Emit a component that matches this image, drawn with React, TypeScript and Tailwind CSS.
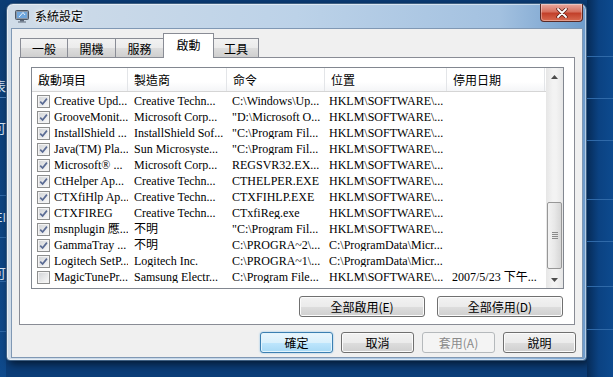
import React from 'react';

const cjk = "font-['Noto_Sans_CJK_TC','Noto_Sans',sans-serif]";
const ming = "font-['Liberation_Serif','Noto_Sans_CJK_TC',serif]";

interface StartupRow {
  on: boolean;
  name: string;
  maker: string;
  cmd: string;
  loc: string;
  date: string;
}

const rows: StartupRow[] = [
  { on: true, name: 'Creative Upd...', maker: 'Creative Techn...', cmd: 'C:\\Windows\\Up...', loc: 'HKLM\\SOFTWARE\\...', date: '' },
  { on: true, name: 'GrooveMonit...', maker: 'Microsoft Corp...', cmd: '"D:\\Microsoft O...', loc: 'HKLM\\SOFTWARE\\...', date: '' },
  { on: true, name: 'InstallShield ...', maker: 'InstallShield Sof...', cmd: '"C:\\Program Fil...', loc: 'HKLM\\SOFTWARE\\...', date: '' },
  { on: true, name: 'Java(TM) Pla...', maker: 'Sun Microsyste...', cmd: '"C:\\Program Fil...', loc: 'HKLM\\SOFTWARE\\...', date: '' },
  { on: true, name: 'Microsoft® ...', maker: 'Microsoft Corp...', cmd: 'REGSVR32.EX...', loc: 'HKLM\\SOFTWARE\\...', date: '' },
  { on: true, name: 'CtHelper Ap...', maker: 'Creative Techn...', cmd: 'CTHELPER.EXE', loc: 'HKLM\\SOFTWARE\\...', date: '' },
  { on: true, name: 'CTXfiHlp Ap...', maker: 'Creative Techn...', cmd: 'CTXFIHLP.EXE', loc: 'HKLM\\SOFTWARE\\...', date: '' },
  { on: true, name: 'CTXFIREG', maker: 'Creative Techn...', cmd: 'CTxfiReg.exe', loc: 'HKLM\\SOFTWARE\\...', date: '' },
  { on: true, name: 'msnplugin 應...', maker: '不明', cmd: '"C:\\Program Fil...', loc: 'HKLM\\SOFTWARE\\...', date: '' },
  { on: true, name: 'GammaTray ...', maker: '不明', cmd: 'C:\\PROGRA~2\\...', loc: 'C:\\ProgramData\\Micr...', date: '' },
  { on: true, name: 'Logitech SetP...', maker: 'Logitech Inc.', cmd: 'C:\\PROGRA~1\\...', loc: 'C:\\ProgramData\\Micr...', date: '' },
  { on: false, name: 'MagicTunePr...', maker: 'Samsung Electr...', cmd: 'C:\\Program File...', loc: 'HKLM\\SOFTWARE\\...', date: '2007/5/23 下午...' },
];

const Checkbox = ({ on }: { on: boolean }) => (
  <span className="w-[13px] h-[13px] shrink-0 border border-[#8e8f8f] bg-[#f4f4f4] p-[1px] flex">
    <span className="flex-1 flex items-center justify-center bg-[linear-gradient(135deg,#d4d6d9,#f7f7f7)]">
      {on && (
        <svg width="9" height="9" viewBox="0 0 9 9">
          <path d="M1.2 4.6 L3.6 7 L7.9 1.6" fill="none" stroke="#5a6b94" strokeWidth="1.7" />
        </svg>
      )}
    </span>
  </span>
);

const Tab = ({ label, w, active, first }: { label: string; w: string; active?: boolean; first?: boolean }) => (
  <div
    className={
      active
        ? `relative z-10 -ml-px ${w} h-[25px] bg-white border border-b-0 border-[#898c95] flex justify-center pt-[4px] text-[12px] leading-[14px] text-black ${cjk}`
        : `${first ? '' : '-ml-px'} ${w} h-[20px] border border-[#898c95] bg-[linear-gradient(to_bottom,#f2f2f2,#ebebeb_50%,#dddddd_51%,#cfcfcf)] flex justify-center pt-[3px] text-[12px] leading-[14px] text-black ${cjk}`
    }
  >
    {label}
  </div>
);

const Button = ({ label, w, kind }: { label: string; w: string; kind?: 'default' | 'disabled' }) => {
  const base = `${w} h-[21px] rounded-[3px] border flex items-center justify-center text-[12px] leading-none ${cjk}`;
  if (kind === 'default')
    return (
      <div className={`${base} border-[#3c7fb1] text-black bg-[linear-gradient(to_bottom,#eaf6fd,#d9f0fc_50%,#bee6fd_51%,#a7d9f5)] shadow-[inset_0_0_0_1px_#e2f4fd,0_0_2px_#7ab8e4]`}>
        {label}
      </div>
    );
  if (kind === 'disabled')
    return <div className={`${base} border-[#b5b9bc] bg-[#f4f4f4] text-[#8a8a8a]`}>{label}</div>;
  return (
    <div className={`${base} border-[#707070] text-black bg-[linear-gradient(to_bottom,#f2f2f2,#ebebeb_50%,#dddddd_51%,#cfcfcf)] shadow-[inset_0_0_0_1px_#fbfbfb]`}>
      {label}
    </div>
  );
};

const ScrollArrow = ({ up }: { up?: boolean }) => (
  <div className="h-[17px] flex items-center justify-center">
    <svg width="7" height="4" viewBox="0 0 7 4">
      <path d={up ? 'M0 4 L3.5 0 L7 4 Z' : 'M0 0 L3.5 4 L7 0 Z'} fill="#4d4d4d" />
    </svg>
  </div>
);

const colW = ['w-[96px]', 'w-[99px]', 'w-[98px]', 'w-[122px]', 'w-[98px]'];
const headers = ['啟動項目', '製造商', '命令', '位置', '停用日期'];

const StartupList = () => (
  <div className="ml-[11px] mt-[9px] w-[533px] h-[222px] border border-[#828790] bg-white flex">
    <div className="flex-1 flex flex-col overflow-hidden">
      <div className="h-[24px] flex border-b border-[#d5d5d5] bg-[linear-gradient(to_bottom,#ffffff,#ffffff_60%,#f4f5f7)] shrink-0">
        {headers.map((h, i) => (
          <div key={h} className={`${colW[i]} shrink-0 border-r border-[#e3e5e8] pl-[6px] flex items-center text-[12px] text-black ${cjk}`}>
            {h}
          </div>
        ))}
      </div>
      <div className="pt-[1px] flex flex-col">
        {rows.map((r) => (
          <div key={r.name} className={`h-[16px] flex items-center text-[12px] leading-none text-black ${ming}`}>
            <div className={`${colW[0]} shrink-0 pl-[5px] flex items-center gap-[4px] overflow-hidden whitespace-nowrap`}>
              <Checkbox on={r.on} />
              <span>{r.name}</span>
            </div>
            <div className={`${colW[1]} shrink-0 pl-[6px] overflow-hidden whitespace-nowrap`}>{r.maker}</div>
            <div className={`${colW[2]} shrink-0 pl-[5px] overflow-hidden whitespace-nowrap`}>{r.cmd}</div>
            <div className={`${colW[3]} shrink-0 pl-[4px] overflow-hidden whitespace-nowrap`}>{r.loc}</div>
            <div className={`${colW[4]} shrink-0 pl-[5px] overflow-hidden whitespace-nowrap`}>{r.date}</div>
          </div>
        ))}
      </div>
    </div>
    {/* scrollbar */}
    <div className="w-[17px] flex flex-col bg-[linear-gradient(to_right,#e6e6e6,#f3f3f3_40%,#f3f3f3_60%,#e6e6e6)]">
      <ScrollArrow up />
      <div className="flex-1" />
      <div className="mx-[1px] h-[67px] rounded-[2px] border border-[#979797] bg-[linear-gradient(to_right,#f3f3f3,#e8e8e8_50%,#d6d6d6)] flex flex-col items-center justify-center gap-[1px]">
        {[0, 1, 2, 3].map((i) => (
          <div key={i} className="w-[6px] h-[1px] bg-[#8a8a8a]" />
        ))}
      </div>
      <div className="h-[2px]" />
      <ScrollArrow />
    </div>
  </div>
);

const TitleIcon = () => (
  <svg width="14" height="14" viewBox="0 0 14 14">
    <rect x="0.5" y="1.5" width="13" height="9" rx="1" fill="#8b97a6" stroke="#4d5866" />
    <rect x="2" y="3" width="10" height="6" fill="#6fa6dc" />
    <path d="M4 8 L8 3.5 L10 6" fill="none" stroke="#e8f2fb" strokeWidth="1" />
    <rect x="5" y="11" width="4" height="1.5" fill="#5d6878" />
    <rect x="3" y="12.5" width="8" height="1" fill="#5d6878" />
  </svg>
);

const CloseButton = () => (
  <div className="w-[43px] h-[18px] rounded-b-[4px] border border-t-0 border-[#5a2a26] bg-[linear-gradient(to_bottom,#e9a99f,#d7715f_45%,#c2402a_55%,#d86a50)] shadow-[inset_0_0_0_1px_rgba(255,255,255,0.35)] flex items-center justify-center">
    <svg width="12" height="10" viewBox="0 0 12 10">
      <path d="M2 1 L10 9 M10 1 L2 9" stroke="#5b1f17" strokeWidth="3.4" strokeLinecap="round" />
      <path d="M2 1 L10 9 M10 1 L2 9" stroke="#ffffff" strokeWidth="1.8" strokeLinecap="round" />
    </svg>
  </div>
);

const DesktopLines = ({ marks }: { marks: number[] }) => (
  <div className="flex flex-col">
    {marks.map((h, i) => (
      <div key={i} style={{ height: h }} className="border-b border-[#2f69a8]" />
    ))}
  </div>
);

export default function App() {
  return (
    <div className={`w-[613px] h-[377px] overflow-hidden bg-[#0b3d78] flex ${cjk}`}>
      {/* desktop strip on the left, part of a window behind */}
      <div className="w-[6px] shrink-0 bg-[linear-gradient(to_bottom,#0c3d74,#0f4a8c)] flex flex-col overflow-hidden">
        <div className="h-[78px]" />
        {['表', '可'].map((t, i) => (
          <div key={i} className={`h-[20px] flex justify-end ${i === 0 ? 'border-b border-[#4f83bd] mb-[22px]' : ''}`}>
            <span className="shrink-0 text-[13px] leading-[16px] text-[#dce8f5]">{t}</span>
          </div>
        ))}
        <div className="h-[56px] border-b border-[#2f69a8]" />
        <div className="h-[42px] border-b border-[#2f69a8] flex items-center justify-end">
          <span className="shrink-0 text-[12px] text-[#dce8f5]">EI</span>
        </div>
        <div className="h-[44px] border-b border-[#2f69a8] flex items-end justify-end">
          <span className="shrink-0 text-[13px] leading-[16px] text-[#dce8f5]">可</span>
        </div>
        <div className="h-[50px] border-b border-[#2f69a8]" />
      </div>

      {/* dialog window */}
      <div className="pt-[3px] shrink-0">
        <div className="w-[581px] h-[358px] rounded-t-[7px] rounded-b-[4px] border border-[#3e5f82] bg-[linear-gradient(to_right,#d0dce8,#bcd2e8_50%,#a3c1e0_85%,#6f9ccb)] shadow-[3px_3px_9px_rgba(0,0,0,0.6),inset_0_0_0_1px_rgba(255,255,255,0.5)] flex flex-col">
          {/* title bar */}
          <div className="h-[24px] flex items-start shrink-0">
            <div className="pl-[8px] pt-[5px]">
              <TitleIcon />
            </div>
            <div className="pl-[6px] pt-[5px] text-[12px] leading-[14px] text-black [text-shadow:0_0_6px_#ffffff,0_0_3px_#ffffff]">系統設定</div>
            <div className="flex-1" />
            <div className="pr-[3px]">
              <CloseButton />
            </div>
          </div>

          {/* client area */}
          <div className="ml-[4px] mr-[3px] h-[330px] border border-[#8098b4] bg-[#f0f0f0] flex flex-col">
            <div className="pl-[8px] pt-[4px] flex items-end h-[29px] -mb-px relative z-10">
              <Tab label="一般" w="w-[48px]" first />
              <Tab label="開機" w="w-[49px]" />
              <Tab label="服務" w="w-[49px]" />
              <Tab label="啟動" w="w-[51px]" active />
              <Tab label="工具" w="w-[46px]" />
            </div>
            <div className="ml-[7px] w-[556px] h-[268px] border border-[#898c95] bg-white flex flex-col">
              <StartupList />
              <div className="mt-[7px] pr-[11px] flex justify-end gap-[12px]">
                <Button label="全部啟用(E)" w="w-[126px]" />
                <Button label="全部停用(D)" w="w-[126px]" />
              </div>
            </div>
            <div className="mt-[7px] pr-[6px] flex justify-end gap-[8px]">
              <Button label="確定" w="w-[73px]" kind="default" />
              <Button label="取消" w="w-[73px]" />
              <Button label="套用(A)" w="w-[73px]" kind="disabled" />
              <Button label="說明" w="w-[73px]" />
            </div>
          </div>
        </div>
      </div>

      {/* desktop on the right */}
      <div className="flex-1 bg-[linear-gradient(to_right,#062b57,#0b4282_45%,#0d4a8e)]">
        <DesktopLines marks={[57, 42, 42, 59, 42, 45, 43]} />
      </div>
    </div>
  );
}
